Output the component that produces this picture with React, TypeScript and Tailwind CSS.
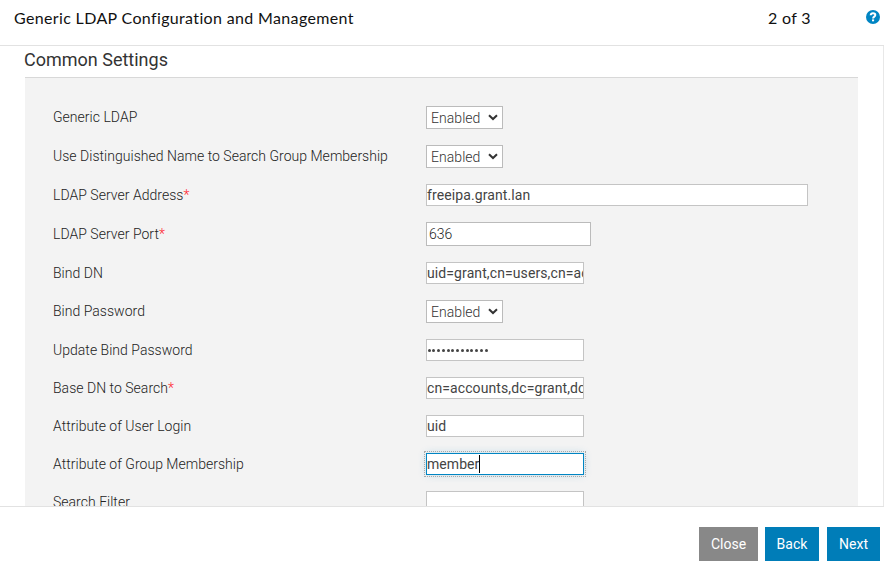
import type { ReactNode } from 'react';

type FieldProps = { label: string; required?: boolean; row?: string; children: ReactNode };

function Field({ label, required, row = 'h-[38px] leading-[22px]', children }: FieldProps) {
  return (
    <div className={`flex shrink-0 items-start ${row}`}>
      <div className="w-[373px] shrink-0 whitespace-nowrap text-[14px] font-light tracking-[0.025px] text-[#222]">
        {label}
        {required && <span className="text-[#ff1f30]">*</span>}
      </div>
      {children}
    </div>
  );
}

function Select() {
  return (
    <div className="flex h-[23px] w-[77px] items-center justify-between border border-[#bbb] bg-white pl-1 pr-1 text-[14px] font-light tracking-[0.05px] text-[#333]">
      <span>Enabled</span>
      <svg width="10" height="7" viewBox="0 0 10 7" fill="none" stroke="#333" strokeWidth="2">
        <path d="M1 1.2 5 5 9 1.2" />
      </svg>
    </div>
  );
}

function Input({ value, wide }: { value?: string; wide?: boolean }) {
  return (
    <div
      className={`h-[22px] overflow-hidden whitespace-nowrap border border-[#c4c4c4] bg-white text-[14px] leading-[20px] tracking-[0.1px] text-[#444] ${wide ? 'w-[382px]' : 'w-[158px]'}`}
    >
      {value}
    </div>
  );
}

export default function App() {
  return (
    <div className="flex h-[579px] w-[884px] flex-col overflow-hidden bg-white font-['Roboto',sans-serif]">
      <header className="flex h-[46px] shrink-0 items-start border-b border-[#e2e2e2] pl-[14px] pr-1 pt-[6px] font-['Lato',sans-serif] text-[16px] font-normal leading-6 text-[#111]">
        <h1 className="flex-1 whitespace-nowrap tracking-[0.35px]">Generic LDAP Configuration and Management</h1>
        <span className="w-[98px] tracking-[0.3px]">2 of 3</span>
        <svg className="mt-1" width="14" height="14" viewBox="0 0 14 14">
          <circle cx="7" cy="7" r="7" fill="#0085c3" />
          <path d="M4.7 5.2C4.8 3.8 5.7 3.2 7 3.2c1.4 0 2.3.7 2.3 1.8 0 1.7-2.2 1.6-2.2 3.4" fill="none" stroke="#fff" strokeWidth="2" />
          <path d="M6 9.4h2.1v1.9H6z" fill="#fff" />
        </svg>
      </header>
      <main className="flex h-[460px] shrink-0 flex-col overflow-hidden border-r border-[#e8e8e8] pl-[25px] pr-[25px]">
        <h2 className="-ml-px h-[31px] shrink-0 text-[18px] leading-[28px] text-[#333]">Common Settings</h2>
        <section className="flex flex-1 flex-col border-t border-[#d8d8d8] bg-[#f3f3f3] pl-7 pt-7">
          <Field label="Generic LDAP" row="h-[39px] leading-[22px]"><Select /></Field>
          <Field label="Use Distinguished Name to Search Group Membership" row="h-[39px] leading-[22px]"><Select /></Field>
          <Field label="LDAP Server Address" required><Input wide value="freeipa.grant.lan" /></Field>
          <Field label="LDAP Server Port" required row="h-[40px] leading-6">
            <div className="h-6 w-[165px] border border-[#bbb] bg-white pl-0.5 text-[14px] font-light leading-[22px] text-[#222]">636</div>
          </Field>
          <Field label="Bind DN"><Input value="uid=grant,cn=users,cn=accounts" /></Field>
          <Field label="Bind Password" row="h-[39px] leading-[22px]"><Select /></Field>
          <Field label="Update Bind Password">
            <div className="flex h-[22px] w-[158px] items-center gap-[1.75px] border border-[#c4c4c4] bg-white pl-[0.5px]">
              {Array.from({ length: 13 }, (_, i) => (
                <span key={i} className="size-[3px] rounded-full bg-[#444]" />
              ))}
            </div>
          </Field>
          <Field label="Base DN to Search" required><Input value="cn=accounts,dc=grant,dc=lan" /></Field>
          <Field label="Attribute of User Login"><Input value="uid" /></Field>
          <Field label="Attribute of Group Membership">
            <div className="flex h-[22px] w-[158px] items-center border border-[#0085c3] bg-white text-[14px] leading-[20px] tracking-[0.05px] text-[#444] shadow-[0_0_8px_rgba(0,133,195,0.2)] outline-1 outline-offset-1 outline-dotted outline-[#aaa]">
              member<span className="h-[18px] w-px bg-black" />
            </div>
          </Field>
          <Field label="Search Filter"><Input /></Field>
        </section>
      </main>
      <footer className="flex flex-1 items-start border-t border-[#e2e2e2] pl-[699px] pt-5 text-[14px] leading-[34px] text-white">
        <button className="mr-[7px] h-[34px] w-[59px] bg-[#888]">Close</button>
        <button className="mr-2 h-[34px] w-[54px] bg-[#007db8]">Back</button>
        <button className="h-[34px] w-[53px] bg-[#007db8]">Next</button>
      </footer>
    </div>
  );
}
